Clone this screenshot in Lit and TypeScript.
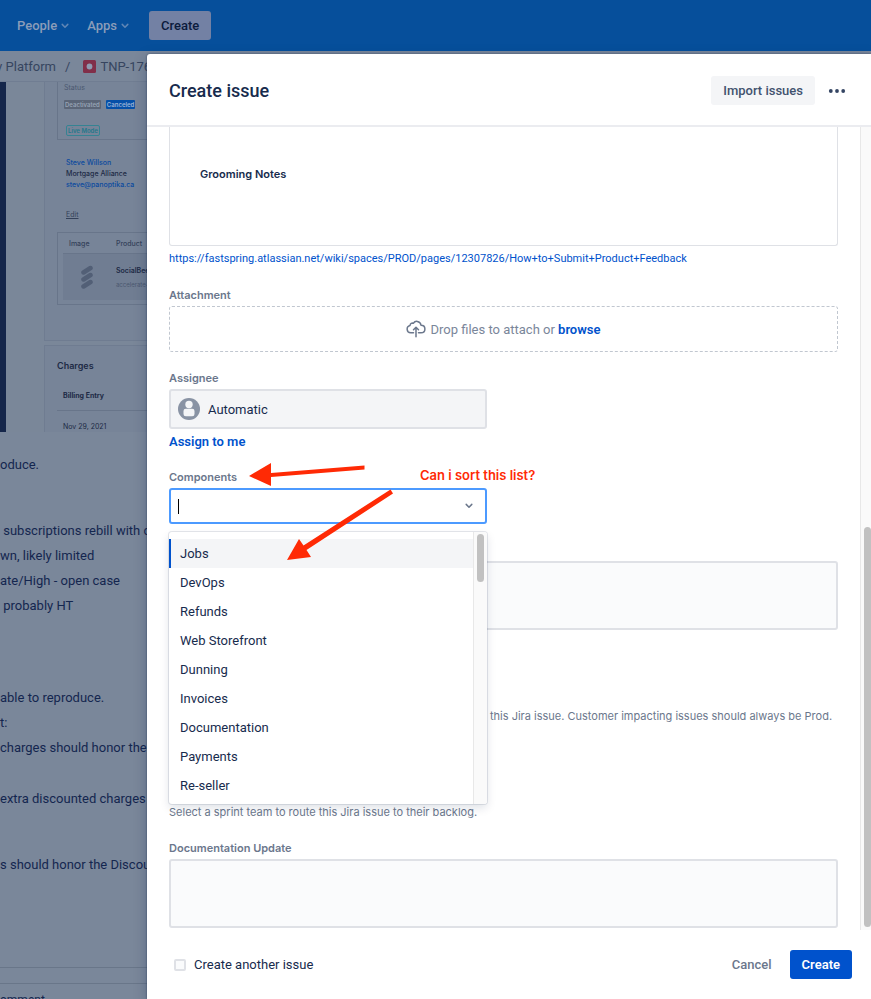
import { LitElement, html, css } from "lit";
import { customElement, state } from "lit/decorators.js";

const chevron = html`<svg class="chev" viewBox="0 0 8 6" aria-hidden="true">
  <path d="M1.2 1.4 4 4.2 6.800 1.4" fill="none" stroke="currentColor" stroke-width="1.500" stroke-linecap="round" stroke-linejoin="round" />
</svg>`;

/* The issue page that stays dimmed behind the dialog. */
@customElement("issue-page")
class IssuePage extends LitElement {
  static styles = css`
    :host {
      display: block;
      height: 100%;
      overflow: hidden;
      background: #7a879a;
      color: #14264f;
      white-space: nowrap;
    }
    * { box-sizing: border-box; }
    p { margin: 0; }
    .nav {
      display: flex;
      align-items: center;
      height: 51px;
      padding-left: 17px;
      background: #064f9b;
      font-size: 13px;
      font-weight: 500;
    }
    .nav button {
      font: inherit;
      border: 0;
      background: none;
      padding: 0;
      display: flex;
      align-items: center;
      gap: 4px;
      color: #8b9db9;
      margin-right: 18px;
    }
    .nav .create {
      background: #7381a4;
      color: #0b1b3d;
      height: 29px;
      padding: 0 12px;
      border-radius: 3px;
      margin: 0 0 0 2px;
    }
    .nav .chev { color: #5f86b5; }
    .chev { width: 8px; height: 6px; }
    .crumbs {
      display: flex;
      align-items: center;
      height: 31px;
      border-bottom: 1px solid #707d92;
      font-size: 13px;
      color: #36455f;
    }
    .project { display: flex; justify-content: flex-end; width: 56px; overflow: hidden; }
    .crumbs .sep { margin: 0 13px 0 9px; }
    .crumbs svg { width: 13px; height: 13px; margin-right: 4px; }
    .shot {
      display: flex;
      height: 350px;
      background: #7a8799;
      font-family: Inter, sans-serif;
      font-size: 7px;
      line-height: 11px;
      color: #1d2a45;
    }
    .rail { width: 6px; background: #15264a; }
    .cards { margin-left: 38px; flex: 1; display: flex; flex-direction: column; gap: 4px; }
    .card { border: 1px solid #6f7c91; border-top: 0; background: #778498; padding-left: 12px; }
    .first { height: 261px; }
    .second { flex: 1; border-top: 1px solid #6f7c91; border-bottom: 0; }
    .status { height: 58px; border: solid #68758a; border-width: 0 0 1px 1px; padding: 0 6px; color: #4b5870; }
    .tags { display: flex; gap: 5px; margin-top: 7px; font-size: 6px; font-weight: 600; line-height: 9px; }
    .tag { background: #5b6577; color: #96a3b5; border-radius: 1px; padding: 0 1px; }
    .blue { background: #0650a8; color: #9db4d6; }
    .mode {
      display: inline-block; margin: 16px 0 0 2px; border: 1px solid #358393; color: #23788b;
      border-radius: 2px; padding: 0 1px; font-size: 6px; font-weight: 600; line-height: 9px;
    }
    .who { margin: 17px 0 0 9px; font-weight: 500; }
    .link { color: #0b4a9f; }
    .edit { margin: 19px 0 0 9px; text-decoration: underline; font-weight: 400; color: #344159; }
    .product { margin-top: 12px; height: 73px; border: solid #68758a; border-width: 1px 0 1px 1px; padding: 5px 0 4px 5px; font-weight: 500; }
    .row { display: grid; grid-template-columns: 40px 1fr; padding-left: 6px; column-gap: 7px; color: #344159; }
    .item { margin-top: 4px; height: 47px; background: #707d92; border-top: 1px solid #68758a; align-items: center; }
    .item svg { width: 12px; height: 24px; margin-left: 12px; }
    .item small { font-size: 6px; font-weight: 400; display: block; margin-top: 3px; color: #4b5870; }
    .item b { color: #1d2a45; font-weight: 600; }
    h2 { margin: 14px 0 18px; font-size: 9px; line-height: 12px; font-weight: 600; }
    .entry { padding-left: 6px; }
    .entry.head { font-weight: 700; padding-bottom: 9px; border-bottom: 1px solid #68758a; margin-bottom: 10px; }
    .body { font-size: 13px; line-height: 25px; padding-top: 20px; }
    .body p { height: 25px; white-space: pre; }
    .body .gap40 { margin-bottom: 41px; }
    .body .gap66 { margin-bottom: 67px; }
    .body .gap26 { margin-bottom: 26px; }
    .comments { margin-top: 90px; border-top: 1px solid #697689; }
    .comments p { margin-top: 15px; border-top: 1px solid #697689; padding-top: 6px; font-size: 12px; line-height: 20px; }
  `;

  render() {
    return html`
      <nav class="nav">
        <button>People ${chevron}</button>
        <button>Apps ${chevron}</button>
        <button class="create">Create</button>
      </nav>
      <div class="crumbs">
        <span class="project">v Platform</span><span class="sep">/</span>
        <svg viewBox="0 0 13 13" aria-hidden="true"><rect width="13" height="13" rx="1.5" fill="#812f49" /><circle cx="6.500" cy="6.500" r="2.900" fill="#8f9ab0" /></svg>
        <span>TNP-176</span>
      </div>
      <div class="shot">
        <div class="rail"></div>
        <div class="cards">
          <div class="card first">
            <div class="status">
              <p>Status</p>
              <div class="tags"><span class="tag">Deactivated</span><span class="tag blue">Canceled</span></div>
              <span class="mode">Live Mode</span>
            </div>
            <div class="who">
              <p class="link">Steve Willson</p>
              <p>Mortgage Alliance</p>
              <p class="link">steve@panoptika.ca</p>
            </div>
            <p class="edit">Edit</p>
            <div class="product">
              <div class="row"><span>Image</span><span>Product</span></div>
              <div class="row item">
                <svg viewBox="0 0 12 24" aria-hidden="true"><path d="M2.500 7.500 9.500 3M2.500 14.500 9.500 10M2.500 21.500 9.500 17" stroke="#525f76" stroke-width="4.500" stroke-linecap="round" /></svg>
                <div><b>SocialBee</b><small>accelerate-1</small></div>
              </div>
            </div>
          </div>
          <div class="card second">
            <h2>Charges</h2>
            <p class="entry head">Billing Entry</p>
            <p class="entry">Nov 29, 2021</p>
          </div>
        </div>
      </div>
      <div class="body">
        <p class="gap40">oduce.</p>
        <p> subscriptions rebill with c</p>
        <p>wn, likely limited</p>
        <p>ate/High - open case</p>
        <p class="gap66"> probably HT</p>
        <p>able to reproduce.</p>
        <p>t:</p>
        <p class="gap26">charges should honor the</p>
        <p class="gap40">extra discounted charges</p>
        <p>s should honor the Discou</p>
      </div>
      <div class="comments"><p>omment</p></div>
    `;
  }
}

@customElement("app-root")
class AppRoot extends LitElement {
  @state() options = ["Jobs", "DevOps", "Refunds", "Web Storefront", "Dunning", "Invoices", "Documentation", "Payments", "Re-seller"];

  static styles = css`
    :host {
      display: block;
      position: relative;
      height: 100vh;
      overflow: hidden;
      font-family: Roboto, "Liberation Sans", sans-serif;
      font-size: 13px;
      color: #172b4d;
    }
    * { box-sizing: border-box; }
    button, input, select, textarea { font: inherit; color: inherit; margin: 0; }
    a { color: #0052cc; text-decoration: none; }
    .dialog {
      position: absolute;
      inset: 54px 0 0 147px;
      background: #fff;
      border-radius: 3px 0 0 0;
      box-shadow: 0 0 2px rgba(9, 30, 66, 0.6), 0 4px 14px rgba(9, 30, 66, 0.25);
      display: flex;
      flex-direction: column;
    }
    header {
      display: flex;
      align-items: center;
      height: 73px;
      padding: 2px 24px 0 22px;
      border-bottom: 2px solid #ebecf0;
    }
    h1 { margin: 0; flex: 1; font-size: 18px; line-height: 24px; font-weight: 500; }
    header button { border: 0; border-radius: 3px; height: 29px; color: #42526e; font-weight: 500; }
    .import { background: #f4f5f7; padding: 0 12px; }
    .more { background: none; padding: 0; margin-left: 12px; width: 20px; display: grid; place-items: center; }
    .more svg { width: 18px; height: 4px; }
    .scroll { flex: 1; min-height: 0; display: flex; }
    .form { flex: 1; min-width: 0; overflow: hidden; padding: 0 22px; }
    .bar { width: 11px; border-left: 1px solid #e8e8e8; background: #fafafa; display: flex; flex-direction: column; align-items: flex-end; justify-content: flex-end; padding-bottom: 3px; }
    .bar i { width: 7px; height: 50%; border-radius: 4px; background: #c1c1c1; }
    .editor, .label, .help, .question { font-family: Inter, "Liberation Sans", sans-serif; }
    .editor { height: 119px; border: 1px solid #dfe1e6; border-top: 0; border-radius: 0 0 3px 3px; padding: 39px 30px; font-size: 11px; line-height: 16px; font-weight: 600; }
    .url { display: block; margin-top: 5px; font-size: 11px; line-height: 16px; }
    .label { display: block; font-size: 11px; line-height: 16px; font-weight: 600; color: #6b778c; margin: 0 0 3px; }
    .attach { margin-top: 20px; }
    .drop { height: 46px; border: 1px dashed #c1c7d0; border-radius: 3px; display: flex; align-items: center; justify-content: center; gap: 4px; color: #7a869a; }
    .drop svg { width: 20px; height: 18px; }
    .drop a, .me { font-weight: 600; }
    .assignee { margin-top: 18px; }
    .box { position: relative; width: 318px; height: 40px; border: 2px solid #dfe1e6; border-radius: 3px; background: #f4f5f7; display: flex; align-items: center; padding-left: 7px; gap: 8px; }
    .box svg.user { width: 22px; height: 22px; }
    .box select, .box input { appearance: none; border: 0; outline: 0; background: none; padding: 0; flex: 1; min-width: 0; height: 100%; opacity: 1; }
    .me { display: block; margin-top: 4px; line-height: 18px; }
    .components { margin-top: 18px; position: relative; }
    .combo { height: 36px; background: #fff; border-color: #4c9aff; padding-right: 12px; gap: 0; }
    .combo .chev { width: 8px; height: 6px; color: #6b778c; }
    .caret { width: 1px; height: 15px; background: #000; }
    .menu {
      position: absolute; z-index: 1; top: 63px; left: 0; width: 318px; height: 272px; display: flex;
      background: #fff; border-radius: 3px; overflow: hidden;
      box-shadow: 0 0 0 1px rgba(9, 30, 66, 0.1), 0 4px 10px rgba(9, 30, 66, 0.13);
    }
    ul { list-style: none; margin: 0; padding: 7px 0; flex: 1; }
    li { height: 29px; line-height: 29px; padding-left: 11px; }
    li.on { background: #f4f5f7; box-shadow: inset 2px 0 0 #0052cc; }
    .menu .bar { width: 14px; justify-content: flex-start; align-items: center; padding-top: 2px; }
    .menu .bar i { height: 48px; border-radius: 4px; }
    textarea { display: block; width: 100%; height: 69px; border: 2px solid #dfe1e6; border-radius: 3px; background: #fafbfc; resize: none; outline: 0; }
    .notes { margin-top: 37px; }
    .help { margin: 0; font-size: 11px; line-height: 16px; color: #6b778c; white-space: nowrap; }
    .side { margin: 78px 0 80px 321px; }
    .docs { margin-top: 20px; }
    footer { height: 69px; display: flex; align-items: center; padding: 0 19px 0 27px; }
    footer label { flex: 1; display: flex; align-items: center; gap: 8px; }
    footer input { appearance: none; width: 12px; height: 12px; border: 2px solid #dfe1e6; border-radius: 2px; background: #fafbfc; }
    footer button { border: 0; border-radius: 3px; height: 29px; font-weight: 500; background: none; color: #6b778c; padding: 0 12px; }
    footer .primary { background: #0052cc; color: #fff; font-weight: 600; margin-left: 6px; }
    .marks { position: absolute; z-index: 2; left: 80px; top: -10px; width: 150px; height: 102px; pointer-events: none; }
    .question { position: absolute; top: -2px; left: 251px; font-size: 13px; line-height: 16px; font-weight: 600; color: #ff2a05; white-space: nowrap; }
  `;

  render() {
    return html`
      <issue-page></issue-page>
      <section class="dialog" role="dialog" aria-labelledby="title">
        <header>
          <h1 id="title">Create issue</h1>
          <button class="import">Import issues</button>
          <button class="more" aria-label="More actions">
            <svg viewBox="0 0 18 4"><g fill="#344563"><circle cx="2.800" cy="2" r="1.900" /><circle cx="9" cy="2" r="1.900" /><circle cx="15.200" cy="2" r="1.900" /></g></svg>
          </button>
        </header>
        <div class="scroll">
          <div class="form">
            <div class="editor">Grooming Notes</div>
            <a class="url" href="#">https://fastspring.atlassian.net/wiki/spaces/PROD/pages/12307826/How+to+Submit+Product+Feedback</a>
            <div class="attach">
              <span class="label">Attachment</span>
              <div class="drop">
                <svg viewBox="0 0 20 18" fill="none" stroke="#6b778c" stroke-width="1.500" stroke-linecap="round" stroke-linejoin="round" aria-hidden="true">
                  <path d="M7.500 12.800H4.700A3.700 3.700 0 0 1 4 5.500C4.300 3.400 5.900 2.800 7.300 3.300 8.300 1.800 9.800 1.200 11.300 1.400c2.200.3 3.500 1.800 3.700 3.800 2.300 0 3.900 1.600 3.900 3.700 0 2.300-1.700 3.900-3.900 3.900h-2.500M10 16.700V7.500M7.500 9.800 10 7.300l2.500 2.500" />
                </svg>
                <span>Drop files to attach or <a href="#">browse</a></span>
              </div>
            </div>
            <div class="assignee">
              <label class="label" for="assignee">Assignee</label>
              <div class="box">
                <svg class="user" viewBox="0 0 22 22" aria-hidden="true"><circle cx="11" cy="11" r="11" fill="#8993a4" /><circle cx="11" cy="6.500" r="3.700" fill="#f4f5f7" /><rect x="5.500" y="10.800" width="11" height="7.500" rx="2.300" fill="#f4f5f7" /></svg>
                <select id="assignee"><option>Automatic</option></select>
              </div>
              <a class="me" href="#">Assign to me</a>
            </div>
            <div class="components">
              <label class="label" for="components">Components</label>
              <div class="box combo">
                <span class="caret"></span>
                <input id="components" role="combobox" aria-expanded="true" aria-controls="options" />
                ${chevron}
              </div>
              <div class="menu">
                <ul id="options" role="listbox">
                  ${this.options.map((o, i) => html`<li role="option" aria-selected=${i === 0} class=${i === 0 ? "on" : ""}>${o}</li>`)}
                </ul>
                <div class="bar"><i></i></div>
              </div>
              <svg class="marks" viewBox="0 0 150 102" fill="#ff2a05" aria-hidden="true">
                <path d="M0 17 22 4V14L115.500 6.500V10.500L22 18V27Z" />
                <path d="M38 101 50 80 54.500 86.500 141.500 30.500 144 34.500 57.500 91 62 98Z" />
              </svg>
              <span class="question">Can i sort this list?</span>
            </div>
            <textarea class="notes" aria-label="Notes"></textarea>
            <p class="help side">this Jira issue. Customer impacting issues should always be Prod.</p>
            <p class="help">Select a sprint team to route this Jira issue to their backlog.</p>
            <div class="docs">
              <label class="label" for="docs">Documentation Update</label>
              <textarea id="docs"></textarea>
            </div>
          </div>
          <div class="bar"><i></i></div>
        </div>
        <footer>
          <label><input type="checkbox" />Create another issue</label>
          <button>Cancel</button>
          <button class="primary">Create</button>
        </footer>
      </section>
    `;
  }
}
